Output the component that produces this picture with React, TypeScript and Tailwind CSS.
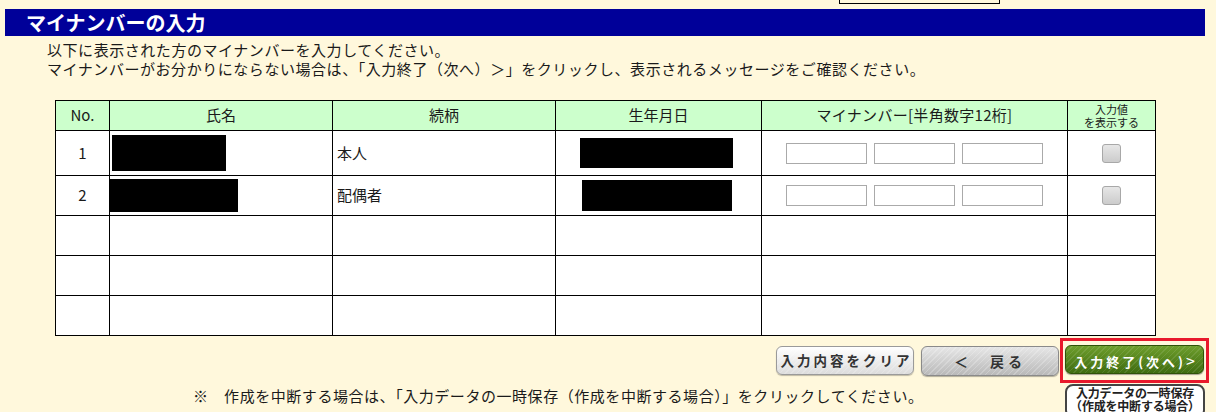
import React from "react";

const stripes =
  "bg-[repeating-linear-gradient(135deg,rgba(255,255,255,0.18)_0px,rgba(255,255,255,0.18)_1px,transparent_1px,transparent_4px),linear-gradient(#ffffff,#dcdcdc)]";

function NumInput() {
  return <div className="w-[81px] h-[21px] border border-[#aaaaaa] bg-white" />;
}

function Check() {
  return (
    <div className="mx-auto w-[19px] h-[19px] rounded-[3px] border border-[#a8a8a8] bg-[linear-gradient(#e6e6e6,#cccccc)]" />
  );
}

type Row = {
  no?: string;
  rel?: string;
  name?: { ml: number; w: number; h: number };
  birth?: { ml: number; w: number; h: number };
  h: string;
  filled: boolean;
};

export default function App() {
  const rows: Row[] = [
    { no: "1", rel: "本人", name: { ml: 2, w: 114, h: 36 }, birth: { ml: 24, w: 153, h: 30 }, h: "h-[45px]", filled: true },
    { no: "2", rel: "配偶者", name: { ml: 0, w: 128, h: 33 }, birth: { ml: 26, w: 150, h: 31 }, h: "h-[40px]", filled: true },
    { h: "h-[40px]", filled: false },
    { h: "h-[40px]", filled: false },
    { h: "h-[40px]", filled: false },
  ];

  return (
    <div className="w-[1216px] h-[412px] overflow-hidden bg-[#fff8dc] text-[#1a1a1a] font-['Noto_Sans_CJK_JP','Noto_Sans',sans-serif]">
      <div className="ml-[839px] w-[161px] h-[4px] border border-t-0 border-black" />
      <div className="mt-[5px] ml-[5px] w-[1200px] h-[27px] bg-[#000099] flex items-center pl-[21px]">
        <span className="text-white font-bold text-[20px] leading-none">マイナンバーの入力</span>
      </div>
      <div className="mt-[4px] pl-[47px] text-[15px] leading-[19px] tracking-[0.55px]">
        <p>以下に表示された方のマイナンバーを入力してください。</p>
        <p>マイナンバーがお分かりにならない場合は、「入力終了（次へ）＞」をクリックし、表示されるメッセージをご確認ください。</p>
      </div>
      <table className="mt-[22px] ml-[55px] w-[1100px] table-fixed border-collapse border border-black text-[15px]">
        <thead>
          <tr className="h-[30px] bg-[#ccffcc]">
            <th className="w-[54px] border border-black font-normal">No.</th>
            <th className="w-[223px] border border-black font-normal">氏名</th>
            <th className="w-[223px] border border-black font-normal">続柄</th>
            <th className="w-[206px] border border-black font-normal">生年月日</th>
            <th className="w-[306px] border border-black font-normal tracking-[0.3px]">マイナンバー[半角数字12桁]</th>
            <th className="w-[88px] border border-black font-normal text-[11px] leading-[13px] p-0">
              入力値
              <br />
              を表示する
            </th>
          </tr>
        </thead>
        <tbody>
          {rows.map((r, i) => (
            <tr key={i} className={`${r.h} bg-white`}>
              <td className="border border-black text-center">{r.no}</td>
              <td className="border border-black p-0">
                {r.name && (
                  <div
                    className="bg-black"
                    style={{ marginLeft: r.name.ml, width: r.name.w, height: r.name.h }}
                  />
                )}
              </td>
              <td className="border border-black pl-[4px]">{r.rel}</td>
              <td className="border border-black p-0">
                {r.birth && (
                  <div
                    className="bg-black"
                    style={{ marginLeft: r.birth.ml, width: r.birth.w, height: r.birth.h }}
                  />
                )}
              </td>
              <td className="border border-black">
                {r.filled && (
                  <div className="flex justify-center gap-[7px]">
                    <NumInput />
                    <NumInput />
                    <NumInput />
                  </div>
                )}
              </td>
              <td className="border border-black">{r.filled && <Check />}</td>
            </tr>
          ))}
        </tbody>
      </table>

      <div className="mt-[2px] flex justify-end items-center pr-[7px]">
        <button
          className={`w-[138px] h-[29px] rounded-[6px] border border-[#9a9a9a] ${stripes} shadow-[0_1px_1px_rgba(0,0,0,0.25)] text-[13.5px] font-bold text-[#333] tracking-[3px] pl-[3px] leading-none`}
        >
          入力内容をクリア
        </button>
        <button
          className="ml-[7px] w-[138px] h-[30px] rounded-[6px] border border-[#8a8a8a] bg-[repeating-linear-gradient(135deg,rgba(255,255,255,0.22)_0px,rgba(255,255,255,0.22)_1px,transparent_1px,transparent_4px),linear-gradient(#e6e6e6,#b9b9b9)] shadow-[0_1px_1px_rgba(0,0,0,0.3)] text-[14px] font-bold text-[#333] tracking-[4px] leading-none"
        >
          ＜　戻る
        </button>
        <div className="ml-[1px] w-[149px] h-[45px] border-[3px] border-[#e8192c] flex items-start justify-center pt-[4px]">
          <button className="w-[139px] h-[29px] rounded-[6px] border border-[#2f5208] bg-[repeating-linear-gradient(135deg,rgba(255,255,255,0.1)_0px,rgba(255,255,255,0.1)_1px,transparent_1px,transparent_4px),linear-gradient(#6e9e2c,#3f6c10)] shadow-[0_1px_1px_rgba(0,0,0,0.35)] text-[13px] font-bold text-white tracking-[3px] pl-[3px] leading-none">
            入力終了(次へ)<span className="text-[16px] font-normal">&gt;</span>
          </button>
        </div>
      </div>

      <div className="flex items-start">
        <p className="flex-1 pl-[193px] mt-[3px] text-[15px] leading-[19px] tracking-[0.55px]">
          ※　作成を中断する場合は、「入力データの一時保存（作成を中断する場合）」をクリックしてください。
        </p>
        <div className="mt-[1px] mr-[11px] w-[140px] h-[34px] rounded-[8px] border-2 border-[#444] bg-white text-[12px] font-bold text-[#222] leading-[13px] tracking-[-0.2px] flex flex-col items-center justify-start pt-0">
          <span>入力データの一時保存</span>
          <span>（作成を中断する場合）</span>
        </div>
      </div>
    </div>
  );
}
